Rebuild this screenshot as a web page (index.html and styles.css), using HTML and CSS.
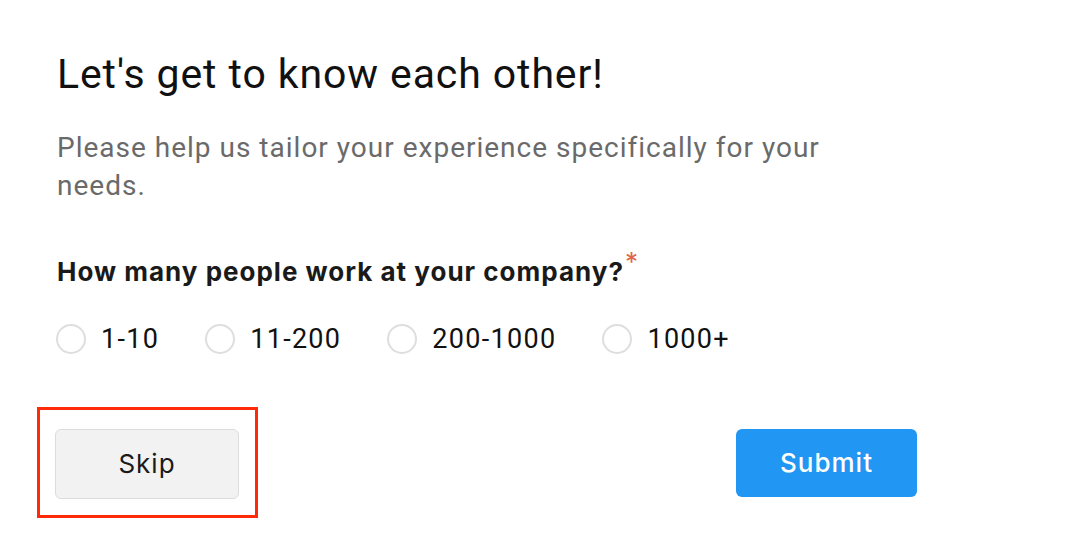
FILE: index.html
```html
<!DOCTYPE html>
<html>
	<head>
		<meta charset="utf-8">
		<link rel="stylesheet" href="styles.css">
	</head>
	<body>
		<div class="wrapper">
			<h1 class="title">Let's get to know each other!</h1>
			<p class="lead">Please help us tailor your experience specifically for your needs.</p>

			<h2 class="question">How many people work at your company?<span class="required">*</span></h2>
			<div class="options">
				<label class="option"><span class="radio"></span>1-10</label>
				<label class="option"><span class="radio"></span>11-200</label>
				<label class="option"><span class="radio"></span>200-1000</label>
				<label class="option"><span class="radio"></span>1000+</label>
			</div>

			<div class="actions">
				<div class="highlight">
					<button class="btn btn-skip">Skip</button>
				</div>
				<button class="btn btn-submit">Submit</button>
			</div>
		</div>
	</body>
</html>
```

FILE: styles.css
```css
body {
	margin: 0;
	font-family: Roboto, "Liberation Sans", sans-serif;
	color: #111;
	background: #fff;
}
.wrapper {
	padding: 47px 0 0 57px;
	width: 860px;
}
.title {
	margin: 0;
	font-size: 41px;
	font-weight: 400;
	line-height: 54px;
	letter-spacing: 0.9px;
}
.lead {
	margin: 28px 0 0;
	width: 790px;
	font-size: 28px;
	line-height: 38px;
	letter-spacing: 1px;
	color: #6a6a6a;
}
.question {
	margin: 42px 0 0;
	font-family: Inter, "Liberation Sans", sans-serif;
	font-size: 26px;
	font-weight: 700;
	line-height: 30px;
	letter-spacing: 1px;
	color: #1a1a1a;
}
.required {
	color: #e0664a;
	font-size: 26px;
	font-weight: 400;
	vertical-align: 10px;
	margin-left: 1px;
}
.options {
	display: flex;
	gap: 46px;
	margin-top: 37px;
	margin-left: -1px;
}
.option {
	display: flex;
	align-items: center;
	gap: 15px;
	font-size: 27px;
	line-height: 30px;
	letter-spacing: 1.3px;
}
.radio {
	width: 26px;
	height: 26px;
	border: 2px solid #dedede;
	border-radius: 50%;
}
.actions {
	display: flex;
	align-items: center;
	margin-top: 53px;
	margin-left: -20px;
}
.highlight {
	border: 3px solid #ff2a0a;
	padding: 19px 16px 16px 15px;
}
.btn {
	font-family: Inter, "Liberation Sans", sans-serif;
	font-size: 26px;
	letter-spacing: 1px;
	border-radius: 6px;
	height: 70px;
	padding-bottom: 3px;
	cursor: pointer;
}
.btn-skip {
	display: block;
	width: 184px;
	background: #f2f2f2;
	border: 1px solid #dcdcdc;
	color: #1a1a1a;
}
.btn-submit {
	margin-left: 478px;
	margin-top: 1px;
	width: 181px;
	height: 68px;
	font-weight: 500;
	background: #2196f3;
	border: none;
	color: #fff;
}
```
